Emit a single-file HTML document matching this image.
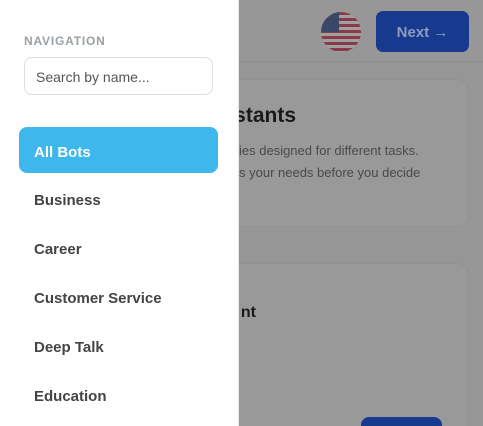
<!DOCTYPE html>
<html><head><style>
*{margin:0;padding:0;box-sizing:border-box}
html,body{width:483px;height:426px;overflow:hidden}
body{position:relative;background:#959695;font-family:"Liberation Sans",sans-serif}
.hdr{position:absolute;left:0;top:0;width:483px;height:62px;background:#979797;border-bottom:1px solid #8f8f8f}
.flag{position:absolute;left:321px;top:12px;width:40px;height:40px;border-radius:50%;overflow:hidden;background:repeating-linear-gradient(#8a3a48 0 3px,#a0a0a0 3px 6px)}
.flag:after{content:"";position:absolute;left:0;top:0;width:18px;height:20px;background:#3a4766}
.next{position:absolute;left:376px;top:11px;width:93px;height:41px;border-radius:7px;background:#173a8f;color:#8d9cc0;font-weight:bold;font-size:15px;line-height:44px;text-align:center}
.card{position:absolute;left:180px;width:288px;background:#999;border:1px solid #929292;border-radius:10px}
.t1{position:absolute;left:239px;top:104px;font-size:21px;font-weight:bold;color:#1a1a1a;white-space:nowrap;width:57px;overflow:hidden;direction:rtl}
.d{position:absolute;left:239px;font-size:13px;color:#4a4a4a;white-space:nowrap}
.btm{position:absolute;left:361px;top:417px;width:81px;height:20px;border-radius:8px;background:#173a8f}
.side{position:absolute;left:0;top:0;width:239px;height:426px;background:#fff;border-right:1px solid #e6e6e6}
.nav{position:absolute;left:24px;top:34px;font-size:12px;font-weight:bold;color:#9aa1a6;letter-spacing:.8px}
.search{position:absolute;left:24px;top:57px;width:189px;height:38px;border:1px solid #ddd;border-radius:8px;font-size:14px;color:#555;padding:11px 11px}
.item{position:absolute;left:19px;width:199px;height:46px;border-radius:8px;padding-left:15px;line-height:52px;font-size:15px;font-weight:bold;color:#444}
.act{background:#3db7ec;color:#fff}
</style></head><body>
<div class="hdr"></div>
<div class="flag"></div>
<div class="next">Next →</div>
<div class="card" style="top:79px;height:148px"></div>
<div class="card" style="top:263px;height:180px"></div>
<div class="t1">stants</div>
<div class="d" style="top:143px">ies designed for different tasks.</div>
<div class="d" style="top:165px">s your needs before you decide</div>
<div class="t1" style="top:304px;font-size:16px;width:17px">nt</div>
<div class="btm"></div>
<div class="side">
<div class="nav">NAVIGATION</div>
<div class="search">Search by name...</div>
<div class="item act" style="top:127px">All Bots</div>
<div class="item" style="top:175px">Business</div>
<div class="item" style="top:224px">Career</div>
<div class="item" style="top:273px">Customer Service</div>
<div class="item" style="top:322px">Deep Talk</div>
<div class="item" style="top:371px">Education</div>
</div>
</body></html>
